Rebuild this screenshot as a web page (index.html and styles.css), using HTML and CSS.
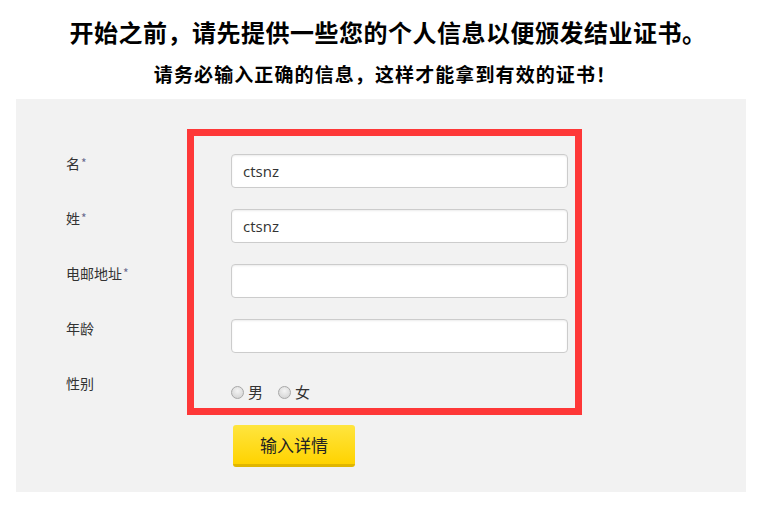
FILE: index.html
```html
<!DOCTYPE html>
<html lang="zh">
<head>
<meta charset="utf-8">
<link rel="stylesheet" href="styles.css">
</head>
<body>
<div class="page">
  <h1 class="title">开始之前，请先提供一些您的个人信息以便颁发结业证书。</h1>
  <h2 class="subtitle">请务必输入正确的信息，这样才能拿到有效的证书！</h2>
  <div class="panel">
    <div class="highlight"></div>
    <form class="form">
      <div class="row">
        <label class="label">名<span class="req">*</span></label>
        <input class="field" type="text" value="ctsnz">
      </div>
      <div class="row">
        <label class="label">姓<span class="req">*</span></label>
        <input class="field" type="text" value="ctsnz">
      </div>
      <div class="row">
        <label class="label">电邮地址<span class="req">*</span></label>
        <input class="field" type="text" value="">
      </div>
      <div class="row">
        <label class="label">年龄</label>
        <input class="field" type="text" value="">
      </div>
      <div class="row row-gender">
        <label class="label">性别</label>
        <div class="radios">
          <label class="radio"><input type="radio" name="g" class="radio-input"><span>男</span></label>
          <label class="radio"><input type="radio" name="g" class="radio-input"><span>女</span></label>
        </div>
      </div>
      <div class="row row-submit">
        <span class="label"></span>
        <button type="button" class="submit">输入详情</button>
      </div>
    </form>
  </div>
</div>
</body>
</html>
```
FILE: styles.css
```css
html, body {
  margin: 0;
  padding: 0;
  background: #ffffff;
}
.page {
  padding: 0 18px 0 16px;
  font-family: "Noto Sans CJK SC", "Noto Sans", sans-serif;
  color: #333;
}
.title {
  margin: 0;
  padding-top: 15px;
  padding-left: 14px;
  height: 34px;
  line-height: 34px;
  text-align: center;
  font-size: 24px;
  font-weight: 700;
  color: #000;
  letter-spacing: 0.5px;
}
.subtitle {
  margin: 0;
  padding-top: 10px;
  padding-left: 8px;
  height: 30px;
  line-height: 30px;
  text-align: center;
  font-size: 19px;
  font-weight: 700;
  color: #000;
  letter-spacing: 1.1px;
}
.panel {
  position: relative;
  margin-top: 10px;
  background: #f2f2f2;
  padding: 55px 0 25px 50px;
}
.highlight {
  position: absolute;
  left: 171px;
  top: 30px;
  width: 395px;
  height: 286px;
  box-sizing: border-box;
  border: 7px solid #fe3838;
  pointer-events: none;
}
.form {
  display: flex;
  flex-direction: column;
  gap: 21px;
  margin: 0;
}
.row {
  display: flex;
  align-items: flex-start;
}
.label {
  width: 165px;
  flex: none;
  font-size: 14px;
  line-height: 18px;
  color: #333;
}
.req {
  font-size: 12px;
  color: #6a6a90;
  vertical-align: top;
  margin-left: 1px;
}
.field {
  position: relative;
  width: 337px;
  height: 34px;
  box-sizing: border-box;
  border: 1px solid #cccccc;
  border-radius: 4px;
  background: #fff;
  box-shadow: inset 0 1px 2px rgba(0,0,0,0.08);
  padding: 0 11px;
  font-family: "Open Sans", "Noto Sans", sans-serif;
  font-size: 15px;
  color: #333;
  outline: none;
  margin: 0;
}
.radios {
  display: flex;
  gap: 15px;
  padding-top: 9px;
}
.radio {
  display: flex;
  align-items: center;
  gap: 4px;
  font-size: 15px;
  line-height: 18px;
  color: #333;
}
.radio-input {
  appearance: none;
  -webkit-appearance: none;
  margin: 0;
  width: 13px;
  height: 13px;
  border-radius: 50%;
  border: 1px solid #a8a8a8;
  background: radial-gradient(circle at 50% 35%, #f4f4f4 0%, #d6d6d6 80%);
  box-sizing: border-box;
}
.row-submit {
  margin-top: 3px;
}
.submit {
  width: 122px;
  height: 42px;
  border: none;
  border-bottom: 3px solid #e0b600;
  border-radius: 3px;
  background: linear-gradient(#ffe53f, #ffd300);
  font-family: "Noto Sans CJK SC", sans-serif;
  font-size: 17px;
  color: #222;
  padding: 0;
  margin-left: 2px;
}
```
